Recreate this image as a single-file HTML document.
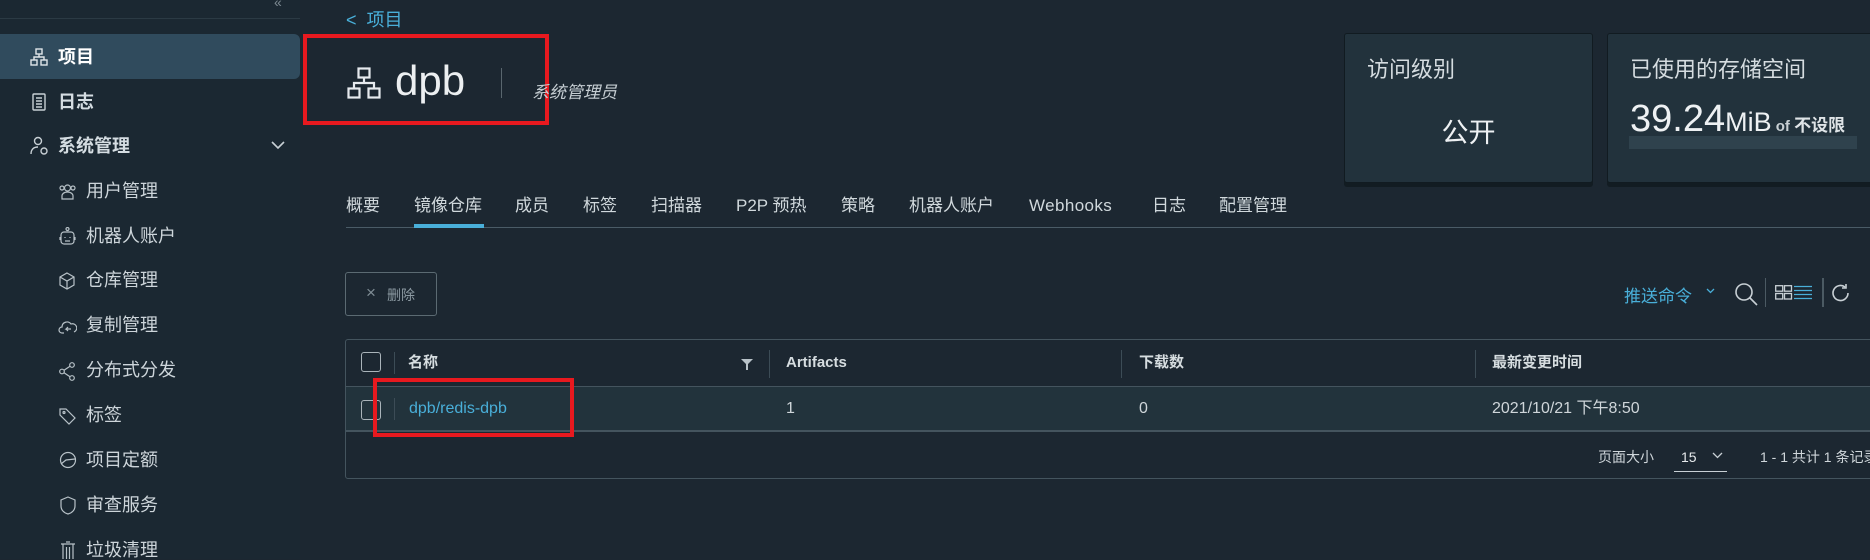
<!DOCTYPE html>
<html><head><meta charset="utf-8"><style>
*{margin:0;padding:0;box-sizing:border-box}
body{width:1870px;height:559px;overflow:hidden;background:#1c2731;font-family:"Liberation Sans","Noto Sans CJK SC",sans-serif;color:#d8dee2;position:relative}
.a{position:absolute;white-space:nowrap}
#sb{position:absolute;left:0;top:0;width:300px;height:559px;background:#1b2832}
.it{position:absolute;font-size:18px;color:#d5dde2;line-height:20px}
.top{left:58px;font-weight:bold}
.sub{left:86px;color:#cdd5da}
.ic{position:absolute}
.tab{position:absolute;top:196px;font-size:17px;color:#d0d8dc;line-height:20px}
.card{position:absolute;top:33px;height:150px;background:#22323c;border:1px solid #111b21;border-radius:3px;box-shadow:0 4px 0 #121c22}
.cb{position:absolute;width:20px;height:20px;border:1px solid #aab4ba;border-radius:3px}
.th{font-size:15px;font-weight:bold;color:#d6dde0;line-height:20px}
.td{font-size:16px;color:#cfd6da;line-height:20px}
.vl{position:absolute;width:1px;background:#3c4c56}
</style></head><body>
<div id="sb">
 <div class="a" style="left:0;top:18px;width:300px;height:1px;background:#2b3a44"></div>
 <div class="a" style="left:274px;top:-6px;font-size:14px;color:#7d8a92">«</div>
 <div class="a" style="left:0;top:34px;width:300px;height:45px;background:#304b5d;border-radius:0 6px 6px 0"></div>
 <svg class="ic" style="left:30px;top:48px" width="18" height="18" viewBox="0 0 18 18" fill="none" stroke="#e0e6ea" stroke-width="1.4"><rect x="6" y="1" width="6" height="5"/><rect x="1" y="12" width="6" height="5"/><rect x="11" y="12" width="6" height="5"/><path d="M9 6v3M4 12V9h10v3"/></svg>
 <div class="it top" style="top:47px;color:#fff">项目</div>
 <svg class="ic" style="left:32px;top:93px" width="14" height="18" viewBox="0 0 14 18" fill="none" stroke="#c8d0d5" stroke-width="1.4"><rect x="1" y="1" width="12" height="16" rx="1"/><path d="M4 5h6M4 8h6M4 11h6M4 14h6"/></svg>
 <div class="it top" style="top:92px">日志</div>
 <svg class="ic" style="left:30px;top:136px" width="20" height="20" viewBox="0 0 20 20" fill="none" stroke="#c8d0d5" stroke-width="1.4"><circle cx="8" cy="5" r="3.5"/><path d="M1 18c0-5 3-7 7-7"/><circle cx="14" cy="15" r="3"/></svg>
 <div class="it top" style="top:136px">系统管理</div>
 <svg class="ic" style="left:271px;top:140px" width="14" height="10" viewBox="0 0 14 10" fill="none" stroke="#c8d0d5" stroke-width="1.6"><path d="M1 2l6 6 6-6"/></svg>
 <svg class="ic" style="left:59px;top:183px" width="17" height="17" viewBox="0 0 17 17" fill="none" stroke="#b8c2c8" stroke-width="1.2"><circle cx="8.5" cy="5" r="3"/><path d="M3 16v-3c0-2 2-4 5.5-4s5.5 2 5.5 4v3z"/><circle cx="3" cy="5" r="2"/><circle cx="14" cy="5" r="2"/></svg>
 <div class="it sub" style="top:181px">用户管理</div>
 <svg class="ic" style="left:59px;top:227px" width="17" height="18" viewBox="0 0 17 18" fill="none" stroke="#b8c2c8" stroke-width="1.2"><circle cx="8.5" cy="2" r="1.5"/><rect x="2" y="5" width="13" height="12" rx="3"/><path d="M6 10v1M11 10v1M6 14h5M1 10v3M16 10v3"/></svg>
 <div class="it sub" style="top:226px">机器人账户</div>
 <svg class="ic" style="left:59px;top:272px" width="16" height="18" viewBox="0 0 16 18" fill="none" stroke="#b8c2c8" stroke-width="1.2"><path d="M8 1l7 4v8l-7 4-7-4V5z"/><path d="M1 5l7 4 7-4M8 9v8"/></svg>
 <div class="it sub" style="top:270px">仓库管理</div>
 <svg class="ic" style="left:58px;top:318px" width="19" height="16" viewBox="0 0 19 16" fill="none" stroke="#b8c2c8" stroke-width="1.2"><path d="M6 15H4a3 3 0 0 1 0-6 5 5 0 0 1 9-3 4 4 0 0 1 3 8"/><path d="M13 11H8l2-2M8 11l2 2"/></svg>
 <div class="it sub" style="top:315px">复制管理</div>
 <svg class="ic" style="left:59px;top:362px" width="17" height="19" viewBox="0 0 17 19" fill="none" stroke="#b8c2c8" stroke-width="1.2"><circle cx="13" cy="3" r="2.3"/><circle cx="3" cy="9.5" r="2.3"/><circle cx="13" cy="16" r="2.3"/><path d="M5 8.3l6-4M5 10.7l6 4"/></svg>
 <div class="it sub" style="top:360px">分布式分发</div>
 <svg class="ic" style="left:59px;top:407px" width="17" height="18" viewBox="0 0 17 18" fill="none" stroke="#b8c2c8" stroke-width="1.2"><path d="M1 2v6l9 9 6-6-9-9z"/><circle cx="5" cy="5.5" r="1"/></svg>
 <div class="it sub" style="top:405px">标签</div>
 <svg class="ic" style="left:59px;top:451px" width="18" height="18" viewBox="0 0 18 18" fill="none" stroke="#b8c2c8" stroke-width="1.2"><circle cx="9" cy="9" r="7.5"/><path d="M2 13l5-4 9-1"/></svg>
 <div class="it sub" style="top:450px">项目定额</div>
 <svg class="ic" style="left:60px;top:496px" width="16" height="19" viewBox="0 0 16 19" fill="none" stroke="#b8c2c8" stroke-width="1.2"><path d="M8 1l7 3v6c0 4-3 7-7 8-4-1-7-4-7-8V4z"/></svg>
 <div class="it sub" style="top:495px">审查服务</div>
 <svg class="ic" style="left:60px;top:541px" width="16" height="18" viewBox="0 0 16 18" fill="none" stroke="#b8c2c8" stroke-width="1.2"><path d="M1 3h14M6 1h4M3 3v15M13 3v15M6.5 6v12M9.5 6v12"/></svg>
 <div class="it sub" style="top:540px">垃圾清理</div>
</div>

<div class="a" style="left:346px;top:6px;font-size:18px;color:#49afd9">&lt;&nbsp; 项目</div>
<div class="a" style="left:303px;top:34px;width:246px;height:91px;border:4px solid #e8191f"></div>
<svg class="ic" style="left:347px;top:67px" width="34" height="32" viewBox="0 0 34 32" fill="none" stroke="#e6eaee" stroke-width="2.2"><rect x="11.5" y="1.5" width="11" height="9"/><rect x="1.5" y="21.5" width="11" height="9"/><rect x="21.5" y="21.5" width="11" height="9"/><path d="M17 10.5v5.5M7 21.5V16h20v5.5"/></svg>
<div class="a" style="left:395px;top:58px;font-size:42px;color:#eceff1;line-height:46px">dpb</div>
<div class="a" style="left:501px;top:68px;width:1px;height:30px;background:#59666e"></div>
<div class="a" style="left:532px;top:78px;font-size:17px;font-style:italic;color:#c5cdd2">系统管理员</div>

<div class="card" style="left:1344px;width:249px">
 <div class="a" style="left:22px;top:18px;font-size:22px;color:#d5dce0">访问级别</div>
 <div class="a" style="left:0;width:247px;text-align:center;top:77px;font-size:27px;color:#eef1f3">公开</div>
</div>
<div class="card" style="left:1607px;width:300px">
 <div class="a" style="left:22px;top:18px;font-size:22px;color:#d5dce0">已使用的存储空间</div>
 <div class="a" style="left:22px;top:64px;color:#eef1f3"><span style="font-size:38px">39.24</span><span style="font-size:27px">MiB</span><span style="font-size:15px;font-weight:bold;color:#c9d1d5"> of </span><span style="font-size:17px;font-weight:bold;color:#dfe4e7">不设限</span></div>
 <div class="a" style="left:21px;top:102px;width:228px;height:13px;background:#2f424d"></div>
</div>

<div class="tab" style="left:346px">概要</div>
<div class="tab" style="left:414px">镜像仓库</div>
<div class="tab" style="left:515px">成员</div>
<div class="tab" style="left:583px">标签</div>
<div class="tab" style="left:651px">扫描器</div>
<div class="tab" style="left:736px">P2P 预热</div>
<div class="tab" style="left:841px">策略</div>
<div class="tab" style="left:909px">机器人账户</div>
<div class="tab" style="left:1029px;letter-spacing:0.4px">Webhooks</div>
<div class="tab" style="left:1152px">日志</div>
<div class="tab" style="left:1219px">配置管理</div>
<div class="a" style="left:346px;top:227px;width:1524px;height:1px;background:#4a5b66"></div>
<div class="a" style="left:414px;top:224px;width:70px;height:4px;background:#49afd9"></div>

<div class="a" style="left:345px;top:272px;width:92px;height:44px;border:1px solid #5b6a72;border-radius:3px"></div>
<div class="a" style="left:366px;top:283px;font-size:17px;color:#7f8d95">×</div>
<div class="a" style="left:387px;top:285px;font-size:14px;color:#8c9aa2">删除</div>

<div class="a" style="left:1624px;top:282px;font-size:17px;color:#49afd9">推送命令</div>
<svg class="ic" style="left:1706px;top:288px" width="9" height="6" viewBox="0 0 9 6" fill="none" stroke="#49afd9" stroke-width="1.3"><path d="M1 1l3.5 3.5L8 1"/></svg>
<svg class="ic" style="left:1734px;top:282px" width="24" height="24" viewBox="0 0 24 24" fill="none" stroke="#c8d0d5" stroke-width="1.6"><circle cx="10" cy="10" r="8"/><path d="M16 16l7 7"/></svg>
<div class="a" style="left:1765px;top:278px;width:1px;height:29px;background:#4b5a63"></div>
<svg class="ic" style="left:1775px;top:285px" width="38" height="15" viewBox="0 0 38 15" fill="none" stroke-width="1.3"><g stroke="#c8d0d5"><rect x="0.7" y="0.7" width="7" height="5.5"/><rect x="9.5" y="0.7" width="7" height="5.5"/><rect x="0.7" y="8.5" width="7" height="5.5"/><rect x="9.5" y="8.5" width="7" height="5.5"/></g><path stroke="#49afd9" d="M19 1.5h18M19 5.5h18M19 9.5h18M19 13.5h18"/></svg>
<div class="a" style="left:1822px;top:278px;width:2px;height:29px;background:#4b5a63"></div>
<svg class="ic" style="left:1831px;top:283px" width="20" height="20" viewBox="0 0 20 20" fill="none" stroke="#c8d0d5" stroke-width="1.6"><path d="M17 10a7.5 7.5 0 1 1-3-6"/><path d="M15 1v4h-4"/></svg>

<div class="a" style="left:345px;top:339px;width:1560px;height:140px;border:1px solid #44545e;border-radius:3px"></div>
<div class="a" style="left:346px;top:386px;width:1524px;height:46px;background:#22333c;border-top:1px solid #44545e;border-bottom:2px solid #44545e"></div>
<div class="cb" style="left:361px;top:352px"></div>
<div class="cb" style="left:361px;top:400px"></div>
<div class="vl" style="left:394px;top:352px;height:22px"></div>
<div class="vl" style="left:394px;top:398px;height:22px"></div>
<div class="a th" style="left:408px;top:353px">名称</div>
<svg class="ic" style="left:741px;top:358px" width="12" height="12" viewBox="0 0 12 12"><path d="M0 1h12L7 6v6H5V6z" fill="#b8c2c8"/></svg>
<div class="vl" style="left:769px;top:350px;height:28px"></div>
<div class="a th" style="left:786px;top:353px">Artifacts</div>
<div class="vl" style="left:1121px;top:350px;height:28px"></div>
<div class="a th" style="left:1139px;top:353px">下载数</div>
<div class="vl" style="left:1475px;top:350px;height:28px"></div>
<div class="a th" style="left:1492px;top:353px">最新变更时间</div>
<div class="a td" style="left:409px;top:399px;color:#49afd9">dpb/redis-dpb</div>
<div class="a td" style="left:786px;top:399px">1</div>
<div class="a td" style="left:1139px;top:399px">0</div>
<div class="a td" style="left:1492px;top:399px">2021/10/21 下午8:50</div>
<div class="a" style="left:373px;top:378px;width:201px;height:59px;border:4px solid #e8191f"></div>
<div class="a" style="left:1598px;top:448px;font-size:14px;color:#cfd6da;line-height:18px">页面大小</div>
<div class="a" style="left:1681px;top:448px;font-size:14px;color:#e6eaec;line-height:18px">15</div>
<svg class="ic" style="left:1712px;top:452px" width="11" height="7" viewBox="0 0 11 7" fill="none" stroke="#c8d0d5" stroke-width="1.3"><path d="M1 1l4.5 4.5L10 1"/></svg>
<div class="a" style="left:1674px;top:471px;width:53px;height:1px;background:#c8d0d5"></div>
<div class="a" style="left:1760px;top:448px;font-size:14px;color:#cfd6da;line-height:18px">1 - 1 共计 1 条记录</div>
</body></html>
